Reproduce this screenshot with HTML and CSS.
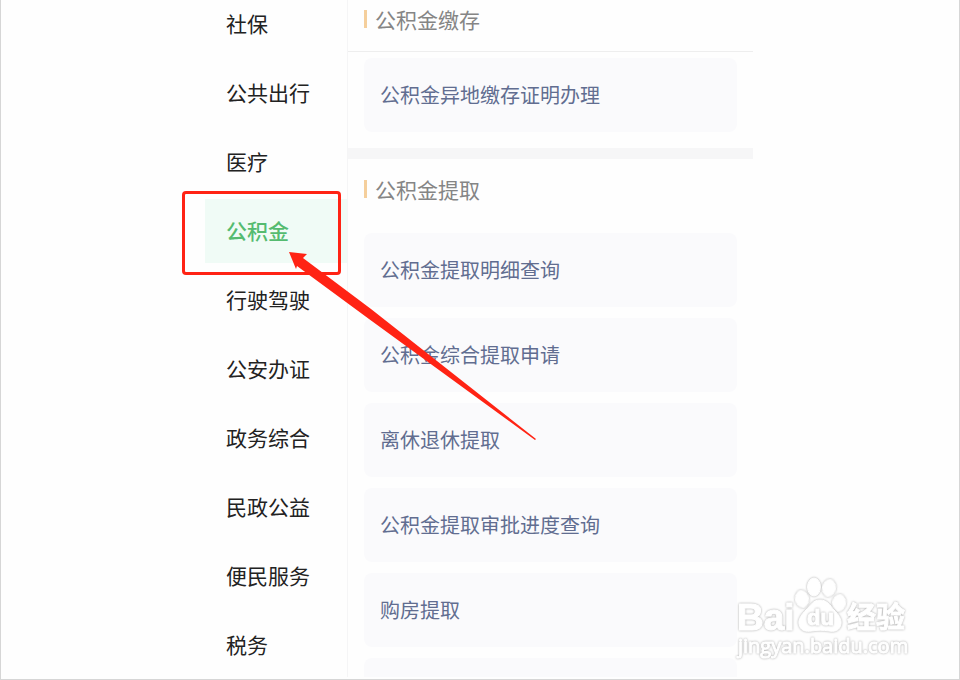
FILE: index.html
```html
<!DOCTYPE html>
<html lang="zh-CN">
  <head>
    <meta charset="UTF-8" />
    <meta name="viewport" content="width=device-width, initial-scale=1.0" />
    <title>公积金</title>
    <link rel="stylesheet" href="styles.css">
  </head>
  <body>
    <div class="page">
      <div class="panel">
        <nav class="sidebar">
          <a href="#" class="nav-item">社保</a>
          <a href="#" class="nav-item">公共出行</a>
          <a href="#" class="nav-item">医疗</a>
          <a href="#" class="nav-item active">
            公积金
            <svg class="arrow" width="250" height="190" viewBox="0 0 250 190" aria-hidden="true">
              <path d="M0 0 L18 2 L14 6 L82 57 L247 187 L246 188 L80 67 L8 14 L7 17 Z" fill="#ff2314" />
            </svg>
          </a>
          <a href="#" class="nav-item">行驶驾驶</a>
          <a href="#" class="nav-item">公安办证</a>
          <a href="#" class="nav-item">政务综合</a>
          <a href="#" class="nav-item">民政公益</a>
          <a href="#" class="nav-item">便民服务</a>
          <a href="#" class="nav-item">税务</a>
        </nav>

        <main class="content">
          <section class="group">
            <h2 class="group-title bordered">公积金缴存</h2>
            <div class="services">
              <a href="#" class="service">公积金异地缴存证明办理</a>
            </div>
          </section>

          <section class="group">
            <h2 class="group-title">公积金提取</h2>
            <div class="services">
              <a href="#" class="service">公积金提取明细查询</a>
              <a href="#" class="service">公积金综合提取申请</a>
              <a href="#" class="service">离休退休提取</a>
              <a href="#" class="service">公积金提取审批进度查询</a>
              <a href="#" class="service">购房提取</a>
              <div class="service"></div>
            </div>
          </section>
        </main>
      </div>

      <svg class="watermark" width="176" height="84" viewBox="0 0 176 84">
        <text class="mark mark-bai" x="0" y="53">Bai</text>
        <ellipse class="mark" cx="65" cy="22" rx="6.500" ry="8.500" transform="rotate(-10 65 22)" />
        <ellipse class="mark" cx="77" cy="10" rx="6.500" ry="9" />
        <ellipse class="mark" cx="92" cy="11" rx="6.500" ry="8.500" transform="rotate(10 92 11)" />
        <ellipse class="mark" cx="102" cy="26" rx="6.500" ry="8.500" transform="rotate(10 102 26)" />
        <path class="mark" d="M83 23 C90 23 93 28 97 33 C101 37 105 42 104 47 C103 54 97 55 92 54 C86 53 80 53 75 54 C69 55 63 54 62 47 C61 42 65 37 69 33 C74 28 76 23 83 23 Z" />
        <text class="mark mark-du" x="70" y="48">du</text>
        <text class="mark mark-cn" x="110" y="51">经验</text>
        <text class="mark mark-url" x="1" y="76">jingyan.baidu.com</text>
      </svg>
    </div>
  </body>
</html>
```
FILE: styles.css
```css
* {
  margin: 0;
  padding: 0;
  box-sizing: border-box;
}

body {
  font-family: "Noto Sans CJK SC", sans-serif;
  background: #fefefe;
  color: #222;
}

a {
  color: inherit;
  text-decoration: none;
}

.page {
  position: relative;
  display: flex;
  justify-content: center;
  height: 100vh;
  padding-bottom: 2px;
  border: 1px solid #d6d6d6;
  border-top: none;
  overflow: hidden;
}

.panel {
  display: flex;
  width: 100%;
  max-width: 550px;
}

/* Category list */
.sidebar {
  display: flex;
  flex-direction: column;
  flex-shrink: 0;
  gap: 5px;
  width: 143px;
  margin-top: -8px;
  border-right: 1px solid #f5f5f6;
}

.nav-item {
  display: flex;
  align-items: center;
  flex-shrink: 0;
  height: 64px;
  padding: 0 0 3px 21px;
  font-size: 21px;
}

.nav-item.active {
  position: relative;
  z-index: 1;
  background: #f0fbf6;
  color: #55bb70;
  font-weight: 500;
}

.nav-item.active::after {
  content: "";
  position: absolute;
  inset: -8px 6px -12px -23px;
  border: 3px solid #ff2314;
  border-radius: 4px;
}

.arrow {
  position: absolute;
  top: 53px;
  left: 84px;
  z-index: 2;
}

/* Services */
.content {
  flex: 1;
  padding-right: 2px;
  overflow: hidden;
}

.group + .group {
  border-top: 11px solid #f6f6f7;
}

.group-title {
  display: flex;
  align-items: center;
  gap: 8px;
  height: 60px;
  padding-left: 16px;
  color: #858585;
  font-size: 21px;
  font-weight: 400;
  line-height: 28px;
}

.group-title::before {
  content: "";
  width: 3px;
  height: 18px;
  background: #f5cf9c;
}

.group-title.bordered {
  height: 52px;
  margin-bottom: 6px;
  padding-bottom: 14px;
  border-bottom: 1px solid #eee;
}

.services {
  display: flex;
  flex-direction: column;
  gap: 11px;
  padding: 0 16px 16px;
}

.group-title:not(.bordered) + .services {
  padding-top: 14px;
}

.service {
  display: flex;
  align-items: center;
  flex-shrink: 0;
  height: 74px;
  padding: 0 16px 2px;
  border-radius: 8px;
  background: #fafafc;
  color: #616d90;
  font-size: 20px;
}

/* Watermark */
.watermark {
  position: absolute;
  right: 46px;
  bottom: 18px;
  overflow: visible;
}

.mark {
  fill: #fff;
  stroke: #fff;
  stroke-width: 1px;
  stroke-linejoin: round;
  filter: drop-shadow(0 0 1px #aaa);
}

.mark-bai {
  font: bold 37px "Liberation Sans", sans-serif;
}

.mark-du {
  font: bold 22px "Liberation Sans", sans-serif;
}

.mark-cn {
  font: bold 29px "Noto Sans CJK SC", sans-serif;
}

.mark-url {
  font: 20px "Open Sans", sans-serif;
}
```
